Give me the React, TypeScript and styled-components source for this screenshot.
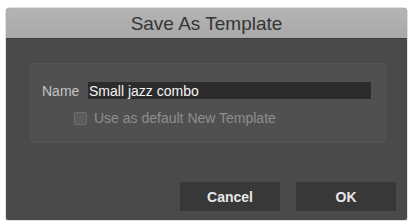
import React from 'react';
import styled, { createGlobalStyle } from 'styled-components';

const GlobalStyle = createGlobalStyle`
  html, body {
    margin: 0;
    padding: 0;
    background: #ffffff;
    font-family: 'Liberation Sans', Arial, sans-serif;
  }
`;

const Page = styled.div`
  width: 412px;
  height: 223px;
  padding: 8px 5px 3px 6px;
  box-sizing: border-box;
`;

const Dialog = styled.section`
  width: 401px;
  height: 212px;
  display: flex;
  flex-direction: column;
  background: #4a4a4a;
  border-radius: 4px 4px 2px 2px;
  overflow: hidden;
  box-shadow: 0 0 0 1px rgba(0, 0, 0, 0.12);
`;

const TitleBar = styled.header`
  height: 31px;
  flex-shrink: 0;
  display: flex;
  align-items: center;
  justify-content: center;
  background: linear-gradient(#b4b4b4, #a9a9a9);
  border-bottom: 1px solid #3e3e3e;
  box-sizing: border-box;
  color: #353535;
  font-size: 19px;
  padding-top: 1px;
`;

const Body = styled.div`
  flex: 1;
  display: flex;
  flex-direction: column;
  padding: 24px 21px 9px 24px;
`;

const Panel = styled.div`
  height: 80px;
  box-sizing: border-box;
  display: flex;
  flex-direction: column;
  gap: 11px;
  padding: 18px 14px 0 11px;
  background: #505050;
  border: 1px solid #545454;
  border-radius: 3px;
`;

const Row = styled.div<{ $indent?: number }>`
  display: flex;
  align-items: center;
  gap: 7px;
  padding-left: ${(p) => p.$indent ?? 0}px;
  font-size: 14px;
`;

const Label = styled.span`
  color: #c4c4c4;
  width: 39px;
`;

const TextField = styled.div`
  flex: 1;
  height: 17px;
  display: flex;
  align-items: center;
  padding-left: 1px;
  background: #2c2c2c;
  color: #f4f4f4;
  font-size: 14px;
`;

const Check = styled.span`
  width: 11px;
  height: 11px;
  border: 1px solid #6e6e6e;
  border-radius: 2px;
  background: #5c5c5c;
`;

const CheckText = styled.span`
  color: #8e8e8e;
`;

const Footer = styled.div`
  margin-top: auto;
  display: flex;
  justify-content: flex-end;
  gap: 16px;
  margin-right: -10px;
`;

const Button = styled.button`
  width: 100px;
  height: 29px;
  border: none;
  background: #383838;
  color: #e8e8e8;
  font-family: 'Liberation Sans', Arial, sans-serif;
  font-weight: bold;
  font-size: 14px;
  padding: 0;
`;

export default function App() {
  return (
    <Page>
      <GlobalStyle />
      <Dialog>
        <TitleBar>Save As Template</TitleBar>
        <Body>
          <Panel>
            <Row>
              <Label>Name</Label>
              <TextField>Small jazz combo</TextField>
            </Row>
            <Row $indent={32}>
              <Check />
              <CheckText>Use as default New Template</CheckText>
            </Row>
          </Panel>
          <Footer>
            <Button>Cancel</Button>
            <Button>OK</Button>
          </Footer>
        </Body>
      </Dialog>
    </Page>
  );
}
